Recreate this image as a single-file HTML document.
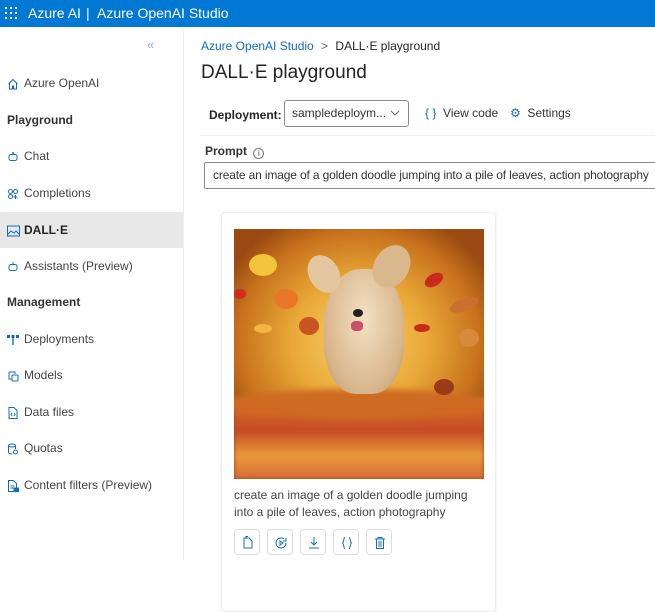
<!DOCTYPE html>
<html><head><meta charset="utf-8"><style>
*{box-sizing:border-box;margin:0;padding:0}
body{width:655px;height:560px;overflow:hidden;background:#fff;font-family:"Segoe UI","Liberation Sans",sans-serif;color:#242424;position:relative}
.top{position:absolute;left:0;top:0;width:655px;height:27px;background:#0078d4;color:#fff;font-size:14px;line-height:25px}
.top .g{position:absolute;left:5px;top:7px;width:12px;height:12px;display:grid;grid-template-columns:repeat(3,2px);gap:3px 3px}
.top .g i{width:2px;height:2px;background:#fff;display:block}
.top span{position:absolute;top:1px}
.side{position:absolute;left:0;top:28px;width:184px;height:532px;border-right:1px solid #eee}
.it{position:absolute;left:0;width:183px;height:36px;font-size:12px;line-height:36px;padding-left:24px;color:#444}
.it svg{position:absolute;left:7px;top:13px}
.hd{position:absolute;left:7px;font-size:12px;font-weight:600;color:#333}
.sel{background:#e8e8e8;font-weight:700;color:#222}
.main{position:absolute;left:185px;top:28px;right:0;bottom:0}
.bc{position:absolute;left:16px;top:11px;font-size:12px}
.bc a{color:#0f6cbd}
h1{position:absolute;left:16px;top:34px;font-size:19px;font-weight:400;color:#242424}
.tb{position:absolute;left:24px;top:73px;font-size:12px}
.dd{position:absolute;left:99px;top:72px;width:125px;height:27px;border:1px solid #8a8a8a;border-radius:3px;font-size:12px;line-height:25px;padding-left:7px;color:#333}
.dd svg{position:absolute;right:8px;top:9px}
.vc{position:absolute;top:78px;font-size:12px;color:#333}
.hr{position:absolute;left:15px;right:0;top:107px;border-top:1px solid #eee}
.pl{position:absolute;left:20px;top:116px;font-size:12px;font-weight:600;color:#333}
.pi{position:absolute;left:19px;top:134px;width:480px;height:27px;border:1px solid #8a8a8a;border-radius:2px;font-size:12px;letter-spacing:-0.15px;line-height:25px;padding-left:8px;color:#333;white-space:nowrap;overflow:hidden}
.card{position:absolute;left:36px;top:184px;width:275px;height:400px;border:1px solid #eee;border-radius:4px;box-shadow:0 1px 3px rgba(0,0,0,.08)}
.img{position:absolute;left:12px;top:16px;width:250px;height:250px;overflow:hidden;
background:radial-gradient(ellipse 60% 55% at 50% 45%,#f7d26a 0%,#e9a837 45%,#c7721c 80%,#9a4a12 100%)}
.cap{position:absolute;left:12px;top:274px;width:250px;font-size:12px;line-height:17px;color:#444}
.btn{position:absolute;top:316px;width:26px;height:26px;border:1px solid #ddd;border-radius:4px}
.btn svg{position:absolute;left:6px;top:6px}
</style></head><body>
<div class="top"><div class="g"><i></i><i></i><i></i><i></i><i></i><i></i><i></i><i></i><i></i></div><span style="left:28px">Azure AI</span><span style="left:86px">|</span><span style="left:97px">Azure OpenAI Studio</span></div>
<div class="side">
<div style="position:absolute;left:147px;top:9px;color:#8ab4e0;font-size:13px">«</div>
<div class="it" style="top:37px"><svg width="12" height="12" viewBox="0 0 12 12" fill="none" stroke="#0f6cbd"><path d="M1.5 6L6 1.5 10.5 6M2.5 5v6h3V8h1v3h3V5"/></svg>Azure OpenAI</div>
<div class="hd" style="top:85px">Playground</div>
<div class="it" style="top:110px"><svg width="12" height="12" viewBox="0 0 12 12" fill="none" stroke="#0f6cbd"><rect x="2" y="3.5" width="8" height="6" rx="2"/><path d="M6 1v2.5M4.5 6.5h0M7.5 6.5h0" stroke-width="1.5"/></svg>Chat</div>
<div class="it" style="top:147px"><svg width="12" height="12" viewBox="0 0 12 12" fill="none" stroke="#0f6cbd"><circle cx="3.5" cy="3.5" r="2"/><circle cx="8.5" cy="3.5" r="2"/><circle cx="3.5" cy="8.5" r="2"/><path d="M8.5 7v4M6.5 9h4"/></svg>Completions</div>
<div class="it sel" style="top:184px"><svg width="13" height="12" viewBox="0 0 13 12" fill="none" stroke="#0f6cbd"><rect x=".5" y="1" width="12" height="10"/><path d="M1 9l3-3 3 2 2-2 3 3"/></svg>DALL·E</div>
<div class="it" style="top:220px"><svg width="12" height="12" viewBox="0 0 12 12" fill="none" stroke="#0f6cbd"><rect x="2" y="3.5" width="8" height="6" rx="2"/><path d="M6 1v2.5"/></svg>Assistants (Preview)</div>
<div class="hd" style="top:267px">Management</div>
<div class="it" style="top:293px"><svg width="12" height="12" viewBox="0 0 12 12" fill="#0f6cbd"><rect x="0" y="1" width="3" height="3"/><rect x="4.5" y="1" width="3" height="3"/><rect x="9" y="1" width="3" height="3"/><rect x="5.3" y="4" width="1.4" height="7"/></svg>Deployments</div>
<div class="it" style="top:329px"><svg width="12" height="12" viewBox="0 0 12 12" fill="none" stroke="#0f6cbd"><path d="M2 2h6v2M2 2v7h3"/><rect x="5" y="5" width="6" height="6" rx="1"/></svg>Models</div>
<div class="it" style="top:366px"><svg width="12" height="12" viewBox="0 0 12 12" fill="none" stroke="#0f6cbd"><path d="M2 .5h5l3 3v8H2z"/><path d="M5 6L4 7.5 5 9M7 6l1 1.5L7 9"/></svg>Data files</div>
<div class="it" style="top:402px"><svg width="12" height="12" viewBox="0 0 12 12" fill="none" stroke="#0f6cbd"><ellipse cx="5" cy="2.5" rx="3.5" ry="1.5"/><path d="M1.5 2.5v7c0 1 2 1.5 3.5 1.5M8.5 2.5V6"/><circle cx="8.5" cy="9" r="2"/></svg>Quotas</div>
<div class="it" style="top:439px"><svg width="12" height="12" viewBox="0 0 12 12" fill="none" stroke="#0f6cbd"><path d="M1.5 .5h5l3 3v8h-8z"/><path d="M3.5 6h4M3.5 8h4" /><rect x="7" y="8" width="4.5" height="3.5" fill="#0f6cbd"/></svg>Content filters (Preview)</div>
</div>
<div class="main">
<div class="bc"><a>Azure OpenAI Studio</a> <span style="color:#666;margin:0 4px">&gt;</span> DALL·E playground</div>
<h1>DALL·E playground</h1>
<div class="tb" style="font-weight:600;top:80px">Deployment:</div>
<div class="dd">sampledeploym...<svg width="10" height="6" viewBox="0 0 10 6" fill="none" stroke="#666"><path d="M1 1l4 4 4-4"/></svg></div>
<div class="vc" style="left:240px"><span style="color:#0f6cbd">{ }</span>&nbsp; View code</div>
<div class="vc" style="left:325px"><span style="color:#0f6cbd">⚙</span>&nbsp; Settings</div>
<div class="hr"></div>
<div class="pl">Prompt <span style="display:inline-block;width:11px;height:11px;border:1px solid #777;border-radius:50%;font-size:8px;line-height:9px;text-align:center;font-weight:400;vertical-align:-1px;margin-left:3px">i</span></div>
<div class="pi">create an image of a golden doodle jumping into a pile of leaves, action photography</div>
<div class="card">
<div class="img">
<div style="position:absolute;left:0;right:0;bottom:0;height:80px;background:linear-gradient(#d8742a,#c84b25 40%,#e99a3a 70%,#d66b3a);filter:blur(2px)"></div>
<div style="position:absolute;left:-10px;right:-10px;top:160px;height:30px;background:#cf6a22;border-radius:50%;filter:blur(3px)"></div>
<div style="position:absolute;left:90px;top:40px;width:80px;height:125px;background:radial-gradient(ellipse at 50% 40%,#f4e1c2,#d7b58c 70%,#b58a5f);border-radius:45% 45% 40% 40%"></div>
<div style="position:absolute;left:75px;top:25px;width:30px;height:40px;background:#e4c7a0;border-radius:50%;transform:rotate(-30deg)"></div>
<div style="position:absolute;left:140px;top:15px;width:35px;height:45px;background:#d9b88e;border-radius:50%;transform:rotate(30deg)"></div>
<div style="position:absolute;left:119px;top:80px;width:10px;height:8px;background:#222;border-radius:50%"></div>
<div style="position:absolute;left:117px;top:92px;width:12px;height:10px;background:#c8506a;border-radius:40%"></div>
<div style="position:absolute;left:15px;top:25px;width:28px;height:22px;background:#f2c53a;border-radius:50%"></div>
<div style="position:absolute;left:40px;top:60px;width:24px;height:20px;background:#e8772a;border-radius:50%"></div>
<div style="position:absolute;left:65px;top:88px;width:20px;height:18px;background:#c8541f;border-radius:50%"></div>
<div style="position:absolute;left:190px;top:45px;width:20px;height:12px;background:#c82a1e;border-radius:50%;transform:rotate(-30deg)"></div>
<div style="position:absolute;left:215px;top:70px;width:30px;height:12px;background:#c9702e;border-radius:50%;transform:rotate(-20deg)"></div>
<div style="position:absolute;left:180px;top:95px;width:16px;height:8px;background:#c82a1e;border-radius:50%"></div>
<div style="position:absolute;left:225px;top:100px;width:20px;height:18px;background:#d78a3a;border-radius:50%"></div>
<div style="position:absolute;left:200px;top:150px;width:20px;height:16px;background:#9a3a18;border-radius:50%"></div>
<div style="position:absolute;left:0px;top:60px;width:12px;height:10px;background:#d22a1e;border-radius:50%"></div>
<div style="position:absolute;left:20px;top:95px;width:18px;height:9px;background:#f0b640;border-radius:50%"></div>
</div>
<div class="cap">create an image of a golden doodle jumping into a pile of leaves, action photography</div>
<div class="btn" style="left:12px"><svg width="14" height="14" viewBox="0 0 14 14" fill="none" stroke="#0f6cbd"><path d="M3 2h5l3 3v7H3z"/><path d="M5 2V.5h2"/></svg></div>
<div class="btn" style="left:45px"><svg width="14" height="14" viewBox="0 0 14 14" fill="none" stroke="#0f6cbd"><path d="M12 7a5 5 0 1 1-2-4M12 2v3H9"/><path d="M6 5v4l3-2z"/></svg></div>
<div class="btn" style="left:78px"><svg width="14" height="14" viewBox="0 0 14 14" fill="none" stroke="#0f6cbd"><path d="M7 1v8M4 6l3 3 3-3M2 12h10"/></svg></div>
<div class="btn" style="left:111px"><svg width="14" height="14" viewBox="0 0 14 14" fill="none" stroke="#0f6cbd"><path d="M5 1.5C3.5 1.5 4 6 2.5 7 4 8 3.5 12.5 5 12.5M9 1.5c1.5 0 1 4.5 2.5 5.5-1.5 1-1 5.5-2.5 5.5"/></svg></div>
<div class="btn" style="left:144px"><svg width="14" height="14" viewBox="0 0 14 14" fill="none" stroke="#0f6cbd"><path d="M2 3h10M5 3V1.5h4V3M3.5 3v9.5h7V3M6 5v6M8 5v6"/></svg></div>
</div>
</div>
</body></html>
